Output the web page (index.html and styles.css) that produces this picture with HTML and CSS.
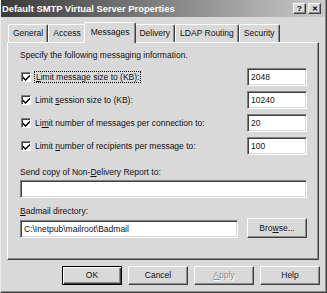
FILE: index.html
```html
<!DOCTYPE html>
<html>
  <head>
    <title>Default SMTP Virtual Server Properties</title>
    <link rel="stylesheet" href="styles.css">
  </head>
  <body>
    <div class="window">
      <div class="titlebar">
        <span class="title">Default SMTP Virtual Server Properties</span>
        <div class="caption-btns">
          <span class="cbtn">?</span>
          <span class="cbtn close">&#x2715;</span>
        </div>
      </div>

      <div class="tabs">
        <span class="tab">General</span>
        <span class="tab">Access</span>
        <span class="tab active">Messages</span>
        <span class="tab">Delivery</span>
        <span class="tab">LDAP Routing</span>
        <span class="tab">Security</span>
      </div>

      <div class="panel">
        <p class="intro">Specify the following messaging information.</p>

        <div class="limits">
          <div class="limit-row">
            <label class="check"><span class="box"><svg viewBox="0 0 7 7" width="7" height="7"><path d="M0 2.5 L2.5 5 L7 0.5 L7 2.5 L2.5 7 L0 4.5 Z" fill="#000"/></svg></span><span class="focus"><u>L</u>imit message size to (KB):</span></label>
            <span class="field small">2048</span>
          </div>
          <div class="limit-row">
            <label class="check"><span class="box"><svg viewBox="0 0 7 7" width="7" height="7"><path d="M0 2.5 L2.5 5 L7 0.5 L7 2.5 L2.5 7 L0 4.5 Z" fill="#000"/></svg></span><span>Limit <u>s</u>ession size to (KB):</span></label>
            <span class="field small">10240</span>
          </div>
          <div class="limit-row">
            <label class="check"><span class="box"><svg viewBox="0 0 7 7" width="7" height="7"><path d="M0 2.5 L2.5 5 L7 0.5 L7 2.5 L2.5 7 L0 4.5 Z" fill="#000"/></svg></span><span>Li<u>m</u>it number of messages per connection to:</span></label>
            <span class="field small">20</span>
          </div>
          <div class="limit-row">
            <label class="check"><span class="box"><svg viewBox="0 0 7 7" width="7" height="7"><path d="M0 2.5 L2.5 5 L7 0.5 L7 2.5 L2.5 7 L0 4.5 Z" fill="#000"/></svg></span><span>Limit <u>n</u>umber of recipients per message to:</span></label>
            <span class="field small">100</span>
          </div>
        </div>

        <p class="field-label ndr">Send copy of Non-<u>D</u>elivery Report to:</p>
        <span class="field wide"></span>

        <p class="field-label badmail"><u>B</u>admail directory:</p>
        <div class="badmail-row">
          <span class="field path">C:\Inetpub\mailroot\Badmail</span>
          <span class="btn browse">Bro<u>w</u>se...</span>
        </div>
      </div>

      <div class="actions">
        <span class="btn default">OK</span>
        <span class="btn">Cancel</span>
        <span class="btn disabled"><u>A</u>pply</span>
        <span class="btn">Help</span>
      </div>
    </div>
  </body>
</html>
```
FILE: styles.css
```css
html,
body {
  margin: 0;
  padding: 0;
}
body {
  width: 327px;
  height: 293px;
  background: #d9d9d9;
  font-family: "Liberation Sans", Arial, sans-serif;
  font-size: 8.5px;
  color: #111;
}
.window {
  box-sizing: border-box;
  width: 327px;
  height: 293px;
  background: #d9d9d9;
  border-left: 1px solid #ececec;
  border-right: 1px solid #404040;
  border-bottom: 1px solid #404040;
  box-shadow: inset -1px -1px 0 #8c8c8c;
  display: flex;
  flex-direction: column;
}
.titlebar {
  height: 17px;
  margin-right: 1px;
  background: linear-gradient(to right, #3a3a3a, #cacaca);
  display: flex;
  align-items: center;
  justify-content: space-between;
}
.title {
  color: #fff;
  font-weight: bold;
  font-size: 9.4px;
  padding-left: 1px;
}
.caption-btns {
  display: flex;
  margin-right: 4px;
}
.cbtn {
  box-sizing: border-box;
  width: 13px;
  height: 11px;
  background: #d9d9d9;
  border-top: 1px solid #fff;
  border-left: 1px solid #fff;
  border-right: 1px solid #404040;
  border-bottom: 1px solid #404040;
  box-shadow: inset -1px -1px 0 #8c8c8c;
  font-weight: bold;
  font-size: 8px;
  line-height: 9px;
  text-align: center;
  color: #000;
}
.cbtn.close {
  margin-left: 2px;
  font-size: 7px;
}
.tabs {
  display: flex;
  align-items: flex-end;
  height: 25px;
  padding-left: 7px;
  position: relative;
  z-index: 1;
}
.tab {
  box-sizing: border-box;
  height: 18px;
  padding: 0 4px;
  line-height: 16px;
  border-top: 1px solid #fff;
  border-left: 1px solid #fff;
  border-right: 1px solid #404040;
  box-shadow: inset -1px 0 0 #8c8c8c;
  border-radius: 2px 2px 0 0;
  background: #d9d9d9;
}
.tab.active {
  height: 21px;
  padding: 0 6px;
  margin: 0 -2px -1px;
  line-height: 18px;
  position: relative;
  z-index: 2;
}
.panel {
  box-sizing: border-box;
  margin: 0 6px;
  width: 312px;
  height: 218px;
  padding: 6px 11px 0 12px;
  border-top: 1px solid #fff;
  border-left: 1px solid #fff;
  border-right: 1px solid #404040;
  border-bottom: 1px solid #404040;
  box-shadow: inset -1px -1px 0 #8c8c8c;
}
.intro,
.field-label {
  margin: 0;
  line-height: 12px;
}
.limits {
  margin-top: 7px;
  display: flex;
  flex-direction: column;
  gap: 5px;
}
.limit-row {
  display: flex;
  align-items: center;
  justify-content: space-between;
  height: 18px;
}
.check {
  display: flex;
  align-items: center;
  gap: 4px;
  padding-left: 1px;
}
.box {
  box-sizing: border-box;
  width: 10px;
  height: 10px;
  background: #fff;
  border-top: 1px solid #808080;
  border-left: 1px solid #808080;
  border-right: 1px solid #fff;
  border-bottom: 1px solid #fff;
  box-shadow: inset 1px 1px 0 #404040;
  display: flex;
  align-items: center;
  justify-content: center;
  padding: 1px 0 0 1px;
}
.focus {
  outline: 1px dotted #000;
  padding: 0 1px;
}
.field {
  box-sizing: border-box;
  height: 18px;
  background: #fff;
  border-top: 1px solid #808080;
  border-left: 1px solid #808080;
  border-right: 1px solid #fff;
  border-bottom: 1px solid #fff;
  box-shadow: inset 1px 1px 0 #404040, inset -1px -1px 0 #d9d9d9;
  padding: 0 3px;
  line-height: 16px;
  display: block;
}
.field.small {
  width: 60px;
}
.field-label.ndr {
  margin-top: 11px;
}
.field.wide {
  margin-top: 2px;
  width: 100%;
}
.field-label.badmail {
  margin-top: 7px;
}
.badmail-row {
  margin-top: 1px;
  display: flex;
  align-items: flex-end;
  justify-content: space-between;
}
.field.path {
  width: 218px;
}
.btn {
  box-sizing: border-box;
  width: 60px;
  height: 19px;
  line-height: 17px;
  text-align: center;
  background: #d9d9d9;
  border-top: 1px solid #fff;
  border-left: 1px solid #fff;
  border-right: 1px solid #404040;
  border-bottom: 1px solid #404040;
  box-shadow: inset -1px -1px 0 #8c8c8c;
}
.btn.browse {
  height: 20px;
  line-height: 18px;
}
.btn.default {
  border: 1px solid #000;
  box-shadow: inset 1px 1px 0 #fff, inset -1px -1px 0 #404040, inset -2px -2px 0 #8c8c8c;
}
.btn.disabled {
  color: #8c8c8c;
  text-shadow: 1px 1px 0 #fff;
}
.actions {
  display: flex;
  justify-content: flex-end;
  gap: 6px;
  margin-top: 6px;
  padding-right: 6px;
}
```
